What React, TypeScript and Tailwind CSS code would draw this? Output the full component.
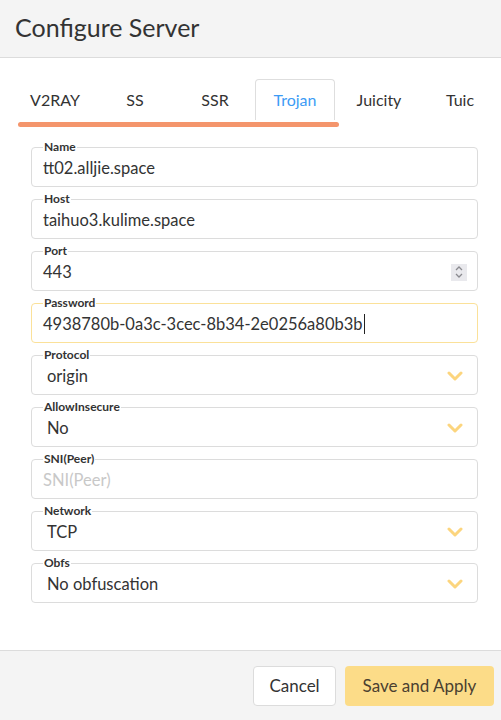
import React from "react";

const font = { fontFamily: "Lato, 'Open Sans', sans-serif" };

function Chevron() {
  return (
    <svg width="16" height="10" viewBox="0 0 16 10" className="shrink-0">
      <path d="M2 2 L8 8 L14 2" fill="none" stroke="#fcd57e" strokeWidth="3" strokeLinecap="round" strokeLinejoin="round" />
    </svg>
  );
}

function Field({ label, children, focused }: { label: string; children: React.ReactNode; focused?: boolean }) {
  return (
    <div
      className={`relative flex h-[40px] items-center rounded-[4px] border px-[11px] ${
        focused ? "border-[#fbe199]" : "border-[#dcdcdc]"
      }`}
    >
      <span className="absolute left-[11px] top-[-8px] bg-white px-[1px] text-[12px] font-bold leading-[14px] text-[#333]">
        {label}
      </span>
      <div className="w-full pt-[2px]">{children}</div>
    </div>
  );
}

function SelectValue({ v }: { v: string }) {
  return (
    <div className="flex items-center justify-between pl-[4px] pr-[3px]">
      <div className="text-[16.5px] leading-[22px]">{v}</div>
      <Chevron />
    </div>
  );
}

const tabs: { t: string; w: string }[] = [
  { t: "V2RAY", w: "w-[80px]" },
  { t: "SS", w: "w-[80px]" },
  { t: "SSR", w: "w-[80px]" },
  { t: "Trojan", w: "w-[80px]" },
  { t: "Juicity", w: "w-[88px]" },
  { t: "Tuic", w: "w-[74px]" },
];

export default function App() {
  return (
    <div className="flex h-[720px] w-[501px] flex-col overflow-hidden bg-white text-[#333]" style={font}>
      <div className="flex h-[58px] items-center border-b border-[#dcdcdc] bg-[#f4f4f4] px-[15px] pb-[3px]">
        <h1 className="text-[25px] leading-none text-[#333]">Configure Server</h1>
      </div>
      <div className="flex-1 pt-[21px]">
        <div className="flex overflow-hidden pl-[15px]">
          {tabs.map(({ t, w }) => (
            <div
              key={t}
              className={`flex h-[41px] ${w} shrink-0 items-center justify-center rounded-t-[4px] border border-b-0 text-[16px] ${
                t === "Trojan" ? "border-[#dedede] text-[#3d9bf5]" : "border-transparent text-[#333]"
              }`}
            >
              {t}
            </div>
          ))}
        </div>
        <div className="ml-[18px] mt-[2px] h-[5px] w-[321px] rounded-full bg-[#f4956c]" />
        <div className="mt-[20px] flex flex-col gap-[12px] pl-[31px] pr-[23px]">
          <Field label="Name">
            <div className="text-[16.5px] leading-[22px]">tt02.alljie.space</div>
          </Field>
          <Field label="Host">
            <div className="text-[16.5px] leading-[22px]">taihuo3.kulime.space</div>
          </Field>
          <Field label="Port">
            <div className="flex items-center justify-between">
              <div className="text-[16.5px] leading-[22px]">443</div>
              <div className="-mr-[1px] flex h-[17px] w-[16px] items-center justify-center bg-[#e9e9ed]">
                <svg width="10" height="14" viewBox="0 0 10 14">
                  <path d="M2 5 L5 2 L8 5 M2 9 L5 12 L8 9" fill="none" stroke="#8a8a8f" strokeWidth="1.3" />
                </svg>
              </div>
            </div>
          </Field>
          <Field label="Password" focused>
            <div className="flex items-center text-[16.5px] leading-[22px]">
              4938780b-0a3c-3cec-8b34-2e0256a80b3b
              <span className="ml-[1px] inline-block h-[20px] w-[1px] bg-[#222]" />
            </div>
          </Field>
          <Field label="Protocol">
            <SelectValue v="origin" />
          </Field>
          <Field label="AllowInsecure">
            <SelectValue v="No" />
          </Field>
          <Field label="SNI(Peer)">
            <div className="text-[16.5px] leading-[22px] text-[#c8c8c8]">SNI(Peer)</div>
          </Field>
          <Field label="Network">
            <SelectValue v="TCP" />
          </Field>
          <Field label="Obfs">
            <SelectValue v="No obfuscation" />
          </Field>
        </div>
      </div>
      <div className="flex h-[70px] items-center justify-end gap-[9px] border-t border-[#dcdcdc] bg-[#f4f4f4] pr-[7px]">
        <button className="h-[40px] w-[83px] rounded-[4px] border border-[#dcdcdc] bg-white text-[17px] text-[#333]">
          Cancel
        </button>
        <button className="h-[40px] w-[149px] rounded-[4px] bg-[#fcdc88] text-[17px] text-[#4a4030]">
          Save and Apply
        </button>
      </div>
    </div>
  );
}
